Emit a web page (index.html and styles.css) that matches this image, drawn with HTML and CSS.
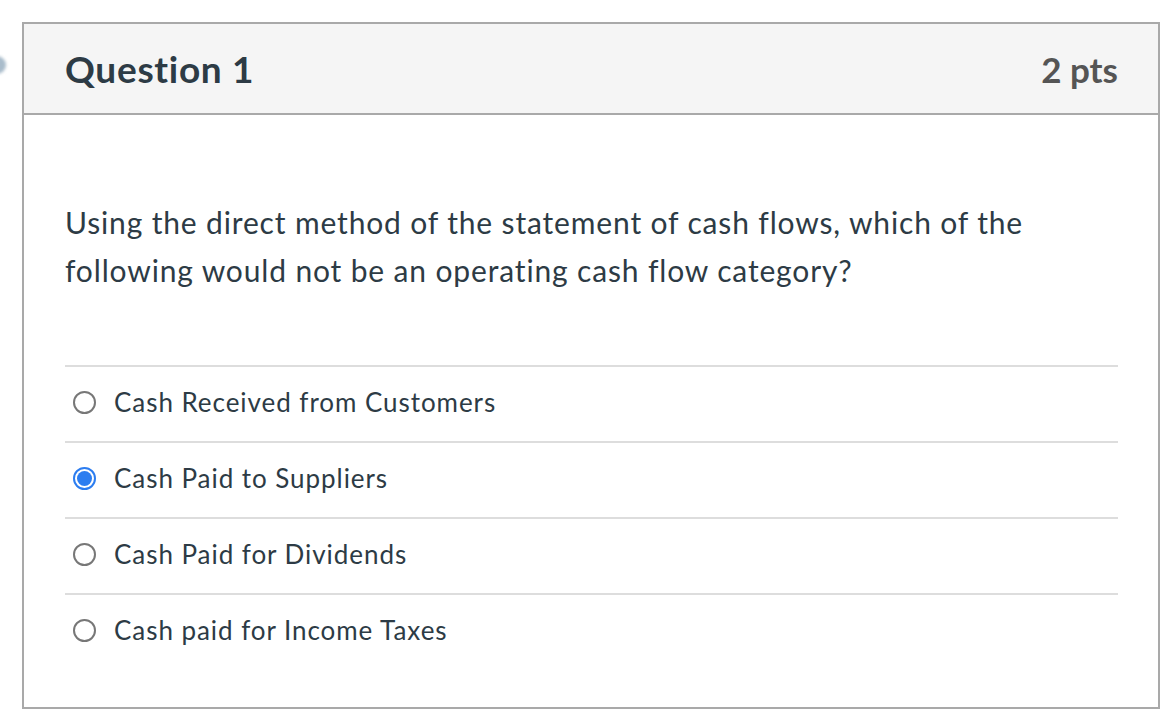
FILE: index.html
```html
<!DOCTYPE html>
<html lang="en">
<head>
<meta charset="utf-8">
<title>Question 1</title>
<link rel="stylesheet" href="styles.css">
</head>
<body>
<div class="page">
  <span class="edge-dot"></span>
  <div class="question">
    <div class="q-header">
      <h2 class="q-title">Question 1</h2>
      <span class="q-points">2 pts</span>
    </div>
    <div class="q-body">
      <p class="q-text">Using the direct method of the statement of cash flows, which of the following would not be an operating cash flow category?</p>
      <div class="answers">
        <label class="answer">
          <span class="radio"></span>
          <span class="answer-text">Cash Received from Customers</span>
        </label>
        <label class="answer">
          <span class="radio checked"></span>
          <span class="answer-text">Cash Paid to Suppliers</span>
        </label>
        <label class="answer">
          <span class="radio"></span>
          <span class="answer-text">Cash Paid for Dividends</span>
        </label>
        <label class="answer">
          <span class="radio"></span>
          <span class="answer-text">Cash paid for Income Taxes</span>
        </label>
      </div>
    </div>
  </div>
</div>
</body>
</html>
```
FILE: styles.css
```css
* { box-sizing: border-box; }
html, body {
  margin: 0;
  padding: 0;
  background: #ffffff;
  font-family: Lato, "Noto Sans", sans-serif;
  color: #2d3b45;
}
.page {
  position: relative;
  padding: 22px 0 0 22px;
  width: 1174px;
  height: 728px;
  overflow: hidden;
}
.edge-dot {
  position: absolute;
  left: -12px;
  top: 56px;
  width: 18px;
  height: 18px;
  border-radius: 50%;
  background: #a9bccb;
  filter: blur(1.5px);
}
.question {
  width: 1138px;
  border: 2px solid #a9a9a9;
  background: #fff;
}
.q-header {
  height: 91px;
  background: #f5f5f5;
  border-bottom: 2px solid #a9a9a9;
  display: flex;
  align-items: center;
  justify-content: space-between;
  padding: 0 40px 0 41px;
}
.q-title {
  margin: 0;
  font-size: 37px;
  font-weight: 700;
  color: #2d3b45;
  letter-spacing: 0.7px;
}
.q-points {
  font-size: 35px;
  font-weight: 700;
  color: #555555;
}
.q-body {
  padding: 83px 40px 38px 41px;
}
.q-text {
  margin: 0;
  font-size: 30px;
  line-height: 48px;
  letter-spacing: 0.85px;
  width: 1040px;
}
.answers {
  margin-top: 71px;
}
.answer {
  display: flex;
  align-items: center;
  height: 76px;
  border-top: 2px solid #dddddd;
  padding-left: 8px;
  padding-bottom: 4px;
  gap: 18px;
}
.radio {
  flex: none;
  width: 23px;
  height: 23px;
  border-radius: 50%;
  border: 2px solid #777777;
  background: #fff;
  position: relative;
}
.radio.checked {
  border-color: #2c7df0;
}
.radio.checked::after {
  content: "";
  position: absolute;
  left: 2px;
  top: 2px;
  width: 15px;
  height: 15px;
  border-radius: 50%;
  background: #2c7df0;
}
.answer-text {
  font-size: 26px;
  line-height: 30px;
  letter-spacing: 0.95px;
  color: #2d3b45;
}
```
